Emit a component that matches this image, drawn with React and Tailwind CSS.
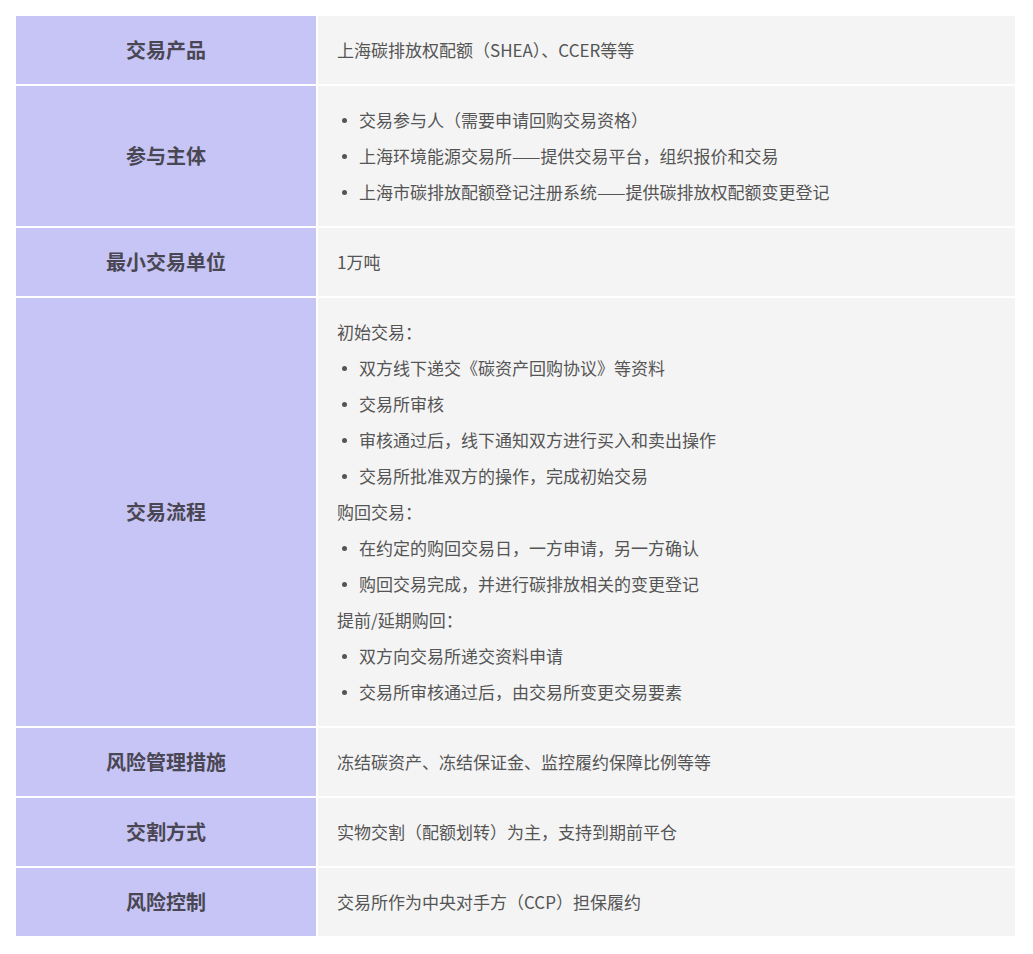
import React from 'react';

const rows = [
  { h: '交易产品', body: [{ t: 'p', v: '上海碳排放权配额（SHEA）、CCER等等' }] },
  {
    h: '参与主体',
    body: [
      { t: 'li', v: '交易参与人（需要申请回购交易资格）' },
      { t: 'li', v: '上海环境能源交易所——提供交易平台，组织报价和交易' },
      { t: 'li', v: '上海市碳排放配额登记注册系统——提供碳排放权配额变更登记' },
    ],
  },
  { h: '最小交易单位', body: [{ t: 'p', v: '1万吨' }] },
  {
    h: '交易流程',
    body: [
      { t: 'p', v: '初始交易：' },
      { t: 'li', v: '双方线下递交《碳资产回购协议》等资料' },
      { t: 'li', v: '交易所审核' },
      { t: 'li', v: '审核通过后，线下通知双方进行买入和卖出操作' },
      { t: 'li', v: '交易所批准双方的操作，完成初始交易' },
      { t: 'p', v: '购回交易：' },
      { t: 'li', v: '在约定的购回交易日，一方申请，另一方确认' },
      { t: 'li', v: '购回交易完成，并进行碳排放相关的变更登记' },
      { t: 'p', v: '提前/延期购回：' },
      { t: 'li', v: '双方向交易所递交资料申请' },
      { t: 'li', v: '交易所审核通过后，由交易所变更交易要素' },
    ],
  },
  { h: '风险管理措施', body: [{ t: 'p', v: '冻结碳资产、冻结保证金、监控履约保障比例等等' }] },
  { h: '交割方式', body: [{ t: 'p', v: '实物交割（配额划转）为主，支持到期前平仓' }] },
  { h: '风险控制', body: [{ t: 'p', v: '交易所作为中央对手方（CCP）担保履约' }] },
];

export default function App() {
  return (
    <div className="bg-white p-4" style={{ fontFamily: '"Microsoft YaHei", "Noto Sans CJK SC", sans-serif' }}>
      <div className="w-[999px] flex flex-col gap-[2px]">
        {rows.map((r, i) => (
          <div key={i} className="flex gap-[2px]">
            <div className="w-[300px] shrink-0 bg-[#c7c5f5] flex items-center justify-center text-[20px] font-bold text-[#4a4754]">
              {r.h}
            </div>
            <div className="flex-1 bg-[#f4f4f4] py-4 pl-[19px] pr-4 text-[17px] leading-[36px] text-[#555]">
              {r.body.map((b, j) =>
                b.t === 'li' ? (
                  <div key={j} className="flex items-center">
                    <span className="w-[5px] h-[5px] rounded-full bg-[#555] ml-[5px] mr-[12px] shrink-0" />
                    {b.v}
                  </div>
                ) : (
                  <div key={j}>{b.v}</div>
                )
              )}
            </div>
          </div>
        ))}
      </div>
    </div>
  );
}
